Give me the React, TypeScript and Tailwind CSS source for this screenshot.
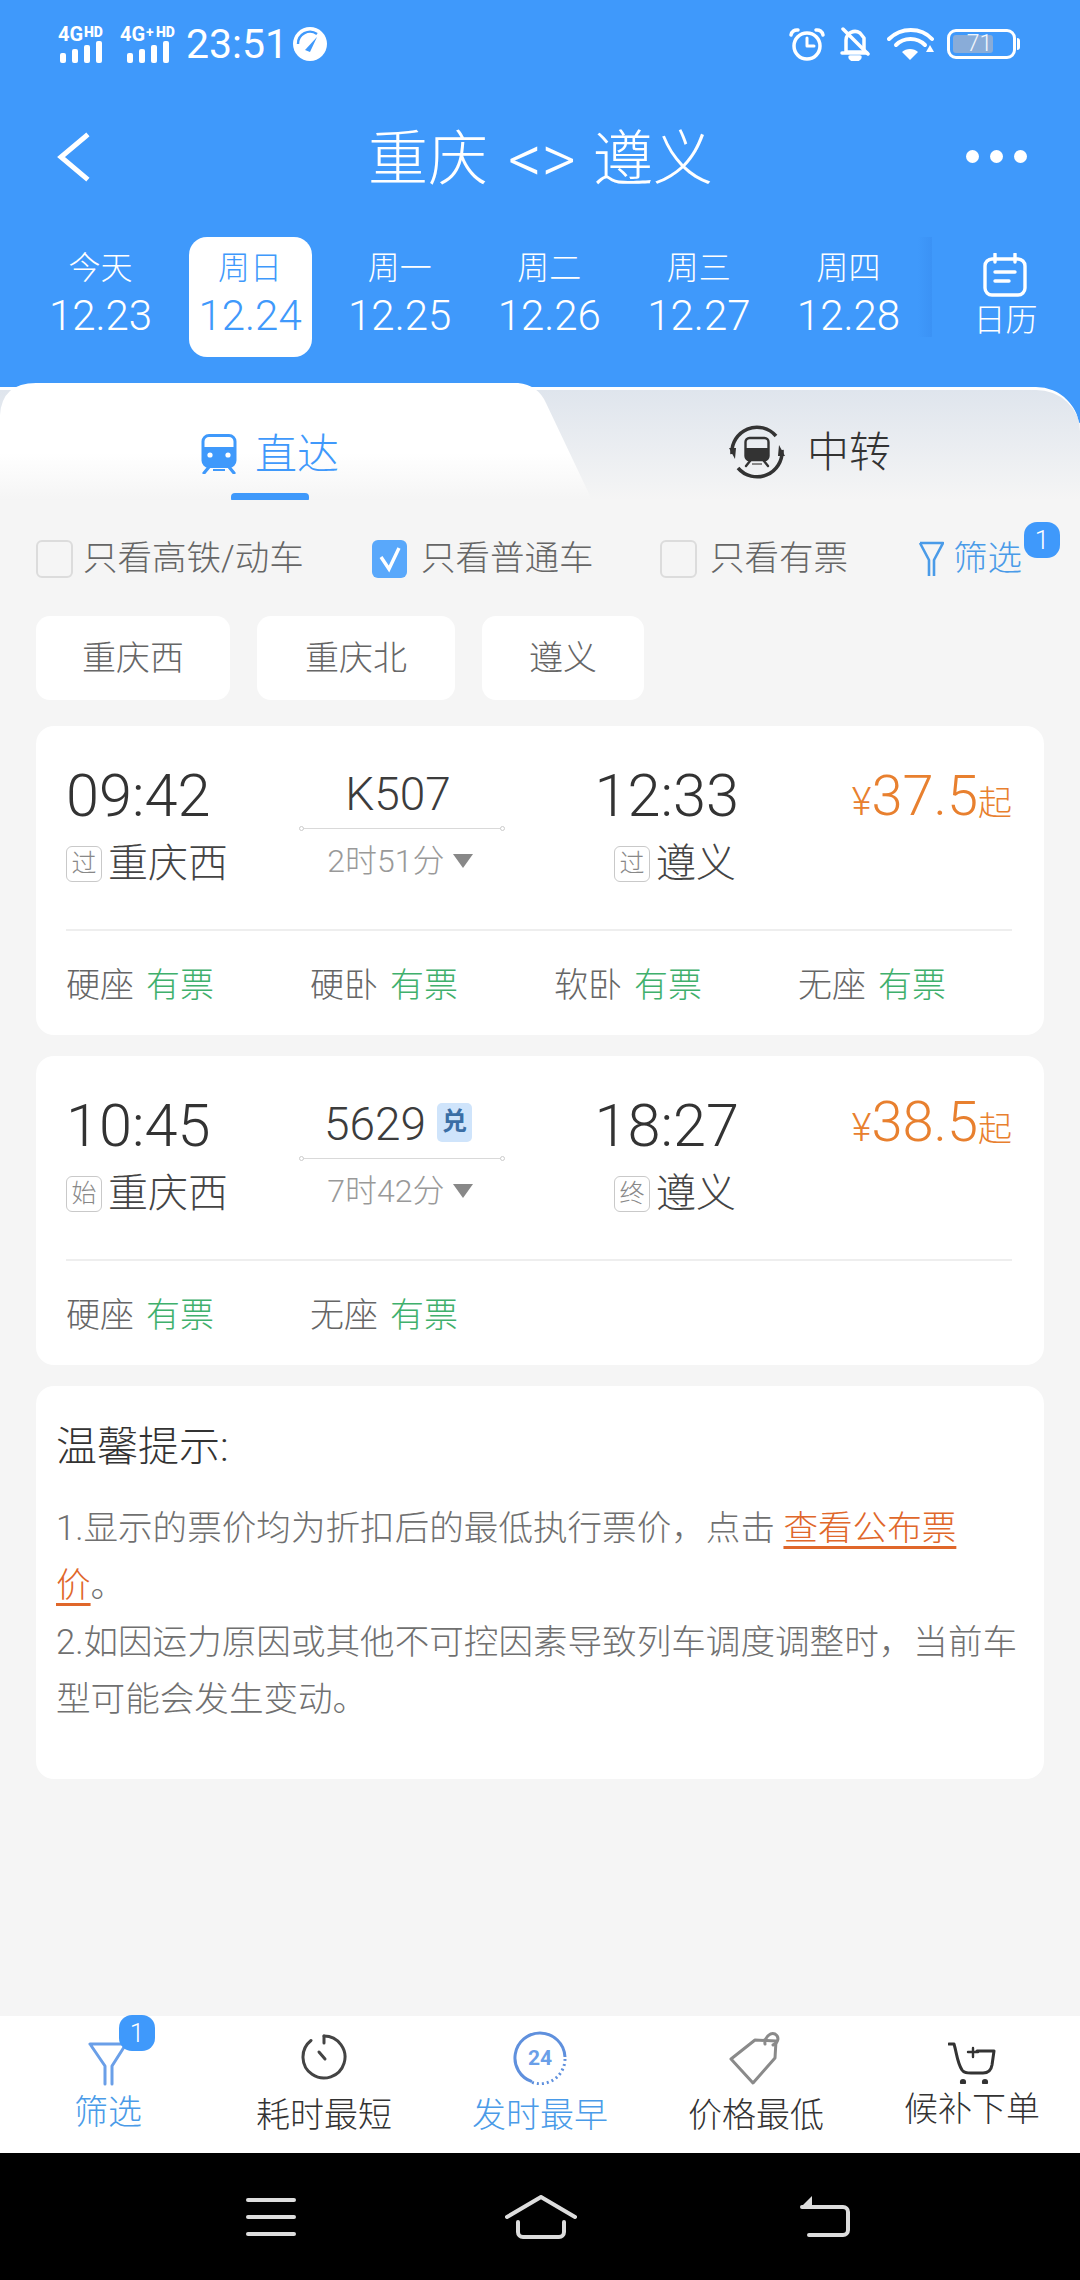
import React from "react";

const BLUE = "#3f99fb";

const dates = [
  { week: "今天", date: "12.23" },
  { week: "周日", date: "12.24", active: true },
  { week: "周一", date: "12.25" },
  { week: "周二", date: "12.26" },
  { week: "周三", date: "12.27" },
  { week: "周四", date: "12.28" },
];

const Signal = ({ plus }: { plus?: boolean }) => (
  <svg className="-mt-[4px]" width="58" height="44" viewBox="0 -4 58 44" fill="white">
    <text x="0" y="17" fontSize="20" fontWeight="700" fontFamily="Roboto">4G</text>
    {plus && <text x="26" y="13" fontSize="14" fontWeight="700" fontFamily="Roboto">+</text>}
    <text x={plus ? 36 : 26} y="13" fontSize="14" fontWeight="900" fontFamily="Roboto">HD</text>
    <rect x={plus ? 7 : 2} y="29" width="6" height="10" rx="2" />
    <rect x={plus ? 19 : 14} y="25" width="6" height="14" rx="2" />
    <rect x={plus ? 31 : 26} y="21" width="6" height="18" rx="2" />
    <rect x={plus ? 43 : 38} y="17" width="6" height="22" rx="2" />
  </svg>
);

const StatusRight = () => (
  <div className="flex items-center">
    {/* alarm */}
    <svg width="36" height="34" viewBox="0 0 36 34" fill="none" stroke="white" strokeWidth="3.5" strokeLinecap="round" strokeLinejoin="round">
      <circle cx="18" cy="19" r="13" />
      <path d="M18 11v8h7" strokeWidth="3" />
      <path d="M2 8a6 6 0 0 1 7-5M34 8a6 6 0 0 0-7-5" strokeWidth="3.5" />
    </svg>
    {/* muted bell */}
    <svg className="ml-[14px]" width="32" height="34" viewBox="0 0 32 34" fill="none" stroke="white" strokeWidth="3.5" strokeLinecap="round" strokeLinejoin="round">
      <path d="M7 25V13a9 9 0 0 1 14-7l4 5v14z" />
      <path d="M3 26h25" />
      <path d="M4 2l25 25" />
      <path d="M11 30a5 3 0 0 0 10 0z" fill="white" />
    </svg>
    {/* wifi */}
    <svg className="ml-[16px]" width="48" height="34" viewBox="0 0 48 34" fill="none" stroke="white" strokeWidth="4" strokeLinecap="round">
      <path d="M2 12c12-12 32-12 43 0" />
      <path d="M9 18c8-8 21-8 29 0" />
      <path d="M23 33l-8-8c4-4 12-4 16 0z" fill="white" stroke="none" />
      <path d="M47 25h-8l4-7z" fill="white" stroke="none" />
    </svg>
    {/* battery */}
    <div className="ml-[12px] flex items-center">
      <div className="w-[69px] h-[30px] rounded-[9px] border-[3px] border-white p-[3px] relative">
        <div className="h-full w-[71%] rounded-[3px] bg-[#89acd8]" />
        <span className="absolute inset-0 flex items-center justify-center text-[23px] text-white/90 pr-[4px]">71</span>
      </div>
      <div className="w-[3px] h-[12px] ml-[1px] rounded-r-full bg-white" />
    </div>
  </div>
);

const TrainMark = ({ color }: { color: string }) => (
  <svg width="36" height="40" viewBox="0 0 36 40" fill="none">
    <rect x="2" y="1.5" width="32" height="31" rx="6" stroke={color} strokeWidth="3" fill="none" />
    <path d="M2 13h32v14a6 6 0 0 1-6 6H8a6 6 0 0 1-6-6z" fill={color} />
    <circle cx="9" cy="21" r="2.6" fill="white" />
    <circle cx="27" cy="21" r="2.6" fill="white" />
    <path d="M8 33l-5 6M28 33l5 6" stroke={color} strokeWidth="3.2" strokeLinecap="round" />
    <path d="M12 36h12" stroke={color} strokeWidth="2" />
  </svg>
);

const TransferIcon = () => (
  <svg width="56" height="56" viewBox="0 0 56 56" fill="none">
    <path d="M3 30A25 25 0 0 1 47 12" stroke="#333" strokeWidth="3.5" />
    <path d="M53 26A25 25 0 0 1 9 44" stroke="#333" strokeWidth="3.5" />
    <path d="M0 24l7 0-1 11z" fill="#333" />
    <path d="M56 32l-7 0 1-11z" fill="#333" />
    <g transform="translate(15 13)">
      <rect x="1.5" y="1" width="23" height="22" rx="4" stroke="#333" strokeWidth="2.4" />
      <path d="M1.5 11h23v9a4 4 0 0 1-4 4h-15a4 4 0 0 1-4-4z" fill="#333" />
      <path d="M6 24l-4 5M20 24l4 5" stroke="#333" strokeWidth="2.4" strokeLinecap="round" />
      <path d="M8 27h10" stroke="#888" strokeWidth="2" />
    </g>
  </svg>
);

const Check = ({ on }: { on?: boolean }) =>
  on ? (
    <div className="w-[35px] h-[38px] rounded-[6px] bg-[#59a8fb] flex items-center justify-center">
      <svg width="26" height="28" viewBox="0 0 26 28" fill="none" stroke="white" strokeWidth="3.4">
        <path d="M4 12l8 12L22 3" />
      </svg>
    </div>
  ) : (
    <div className="w-[37px] h-[38px] rounded-[6px] border-2 border-[#dcdcdc] bg-[#f5f5f5]" />
  );

const Badge = () => (
  <div className="w-[36px] h-[36px] rounded-[13px] bg-[#3f99fb] text-white text-[26px] flex items-center justify-center">1</div>
);

type Train = {
  dep: string;
  arr: string;
  no: string;
  dui?: boolean;
  depTag: string;
  arrTag: string;
  duration: string;
  price: string;
  seats: string[];
  priceTop: string;
};

const trains: Train[] = [
  { dep: "09:42", arr: "12:33", no: "K507", depTag: "过", arrTag: "过", duration: "2时51分", price: "37.5", seats: ["硬座", "硬卧", "软卧", "无座"], priceTop: "-mt-[1px]" },
  { dep: "10:45", arr: "18:27", no: "5629", dui: true, depTag: "始", arrTag: "终", duration: "7时42分", price: "38.5", seats: ["硬座", "无座"], priceTop: "-mt-[5px]" },
];

const Tag = ({ text }: { text: string }) => (
  <span className="w-[36px] h-[36px] rounded-[6px] border border-[#c9c9c9] text-[25px] text-[#888] flex items-center justify-center shrink-0">{text}</span>
);

const TrainCard = ({ t }: { t: Train }) => (
  <div className="bg-white rounded-[18px] h-[309px] pt-[35px] pl-[30px] pr-[32px]">
    <div className="flex h-[136px]">
      <div className="w-[235px] shrink-0">
        <div className="h-[70px] text-[59.5px] leading-[70px] text-[#333]">{t.dep}</div>
        <div className="flex items-center h-[66px]">
          <Tag text={t.depTag} />
          <span className="ml-[6px] text-[40px] text-[#444]">重庆西</span>
        </div>
      </div>
      <div className="w-[202px] shrink-0">
        <div className="h-[67px] flex items-center justify-center pr-[8px] text-[46px] text-[#3c3c3c]">
          <span>{t.no}</span>
          {t.dui && (
            <span className="ml-[11px] -mt-[5px] w-[35px] h-[39px] rounded-[5px] bg-[#cfe4fb] text-[#3a6ea5] text-[25px] font-bold flex items-center justify-center">兑</span>
          )}
        </div>
        <div className="relative h-[1px] bg-[#d9d9d9]">
          <span className="absolute -left-[2px] -top-[2px] w-[5px] h-[5px] rounded-full border border-[#ccc] bg-white" />
          <span className="absolute -right-[2px] -top-[2px] w-[5px] h-[5px] rounded-full border border-[#ccc] bg-white" />
        </div>
        <div className="flex items-center justify-center pr-[4px] h-[64px] text-[32px] text-[#999]">
          <span>{t.duration}</span>
          <span className="ml-[8px] w-0 h-0 border-l-[10px] border-r-[10px] border-t-[14px] border-l-transparent border-r-transparent border-t-[#888]" />
        </div>
      </div>
      <div className="w-[236px] shrink-0 flex flex-col items-end">
        <div className="h-[70px] text-[59.5px] leading-[70px] text-[#333]">{t.arr}</div>
        <div className="flex items-center h-[66px] pr-[3px]">
          <Tag text={t.arrTag} />
          <span className="ml-[6px] text-[40px] text-[#444]">遵义</span>
        </div>
      </div>
      <div className={`flex-1 flex items-baseline justify-end h-[72px] whitespace-nowrap text-[#e8802f] ${t.priceTop}`}>
        <span className="text-[38px]">¥</span>
        <span className="text-[56px] leading-[72px]">{t.price}</span>
        <span className="text-[34px]">起</span>
      </div>
    </div>
    <div className="h-[2px] bg-[#eeeeee] mt-[32px]" />
    <div className="flex h-[108px] items-center text-[34px]">
      {t.seats.map((s) => (
        <div key={s} className="w-[244px] shrink-0 flex">
          <span className="text-[#666]">{s}</span>
          <span className="ml-[12px] text-[#3fb06c]">有票</span>
        </div>
      ))}
    </div>
  </div>
);

const BottomItem = ({ label, active, icon, iconH, textTop }: { label: string; active?: boolean; icon: React.ReactNode; iconH: string; textTop: string }) => (
  <div className="w-[216px] flex flex-col items-center">
    <div className={`flex items-end justify-center ${iconH}`}>{icon}</div>
    <span className={`${textTop} text-[34px] leading-[44px] ${active ? "text-[#4a9be8]" : "text-[#333]"}`}>{label}</span>
  </div>
);

export default function App() {
  return (
    <div className="w-[1080px] h-[2280px] flex flex-col bg-[#f5f5f5] overflow-hidden font-[Roboto,'Noto_Sans_CJK_SC',sans-serif] font-light">
      {/* blue header */}
      <div className="bg-[#3f99fb] text-white">
        <div className="h-[86px] flex items-center justify-between pl-[58px] pr-[60px] pt-[2px]">
          <div className="flex items-center">
            <Signal />
            <div className="ml-[4px]"><Signal plus /></div>
            <span className="ml-[8px] text-[41px] font-normal leading-none">23:51</span>
            <svg className="ml-[5px]" width="34" height="34" viewBox="0 0 34 34">
              <circle cx="17" cy="17" r="17" fill="white" />
              <path d="M5 17a12 12 0 0 1 19-10" stroke="#3f99fb" strokeWidth="2.4" fill="none" />
              <path d="M12 23l12-13-7 15z" fill="#3f99fb" />
            </svg>
          </div>
          <StatusRight />
        </div>
        <div className="h-[144px] flex items-center justify-between pl-[55px] pr-[53px] pt-[3px]">
          <div className="w-[80px] mb-[6px]">
            <svg width="36" height="50" viewBox="0 0 36 50" fill="none" stroke="white" strokeWidth="5">
              <path d="M31 4L6 25l25 21" strokeLinecap="square" />
            </svg>
          </div>
          <div className="flex items-center text-[60px] leading-none mr-[1px]">
            <span>重庆</span>
            <span className="ml-[20px] text-[66px]">&lt;&gt;</span>
            <span className="ml-[17px]">遵义</span>
          </div>
          <div className="w-[80px] flex justify-end gap-[11px] mb-[6px]">
            <span className="w-[13px] h-[13px] rounded-full bg-white" />
            <span className="w-[13px] h-[13px] rounded-full bg-white" />
            <span className="w-[13px] h-[13px] rounded-full bg-white" />
          </div>
        </div>
        <div className="mt-[7px] h-[120px] flex pl-[39px]">
          <div className="flex gap-[26.6px]">
            {dates.map((d) => (
              <div key={d.date} className={`w-[123px] h-[120px] rounded-[18px] flex flex-col items-center pt-[10px] ${d.active ? "bg-white text-[#3f99fb]" : ""}`}>
                <span className="text-[32px] leading-[42px]">{d.week}</span>
                <span className="text-[42px] leading-[54px]">{d.date}</span>
              </div>
            ))}
          </div>
          <div className="ml-[8px] w-[14px] h-[100px] bg-gradient-to-r from-transparent to-[#3b92f5]" />
          <div className="flex-1 flex flex-col items-center pt-[16px] pr-[1px]">
            <svg width="44" height="44" viewBox="0 0 44 44" fill="none" stroke="white" strokeWidth="3.4" strokeLinecap="round">
              <rect x="2" y="6" width="40" height="36" rx="7" />
              <path d="M12 1v8M32 1v8M12 19h20M12 28h14" />
            </svg>
            <span className="text-[32px] leading-[40px] mt-[3px]">日历</span>
          </div>
        </div>
        <div className="h-[26px]" />
      </div>

      {/* tabs */}
      <div className="relative h-[117px] bg-[linear-gradient(#3f99fb_0,#3f99fb_40px,#f5f5f5_40px)]">
        <div className="mt-[4px] h-[113px] rounded-tr-[44px] border-t-[3px] border-white bg-gradient-to-b from-[#dfe5ed] to-[#f5f5f5] flex justify-end">
          <div className="w-[488px] flex items-center h-[124px] pl-[137px]">
            <TransferIcon />
            <span className="ml-[22px] text-[42px] text-[#333]">中转</span>
          </div>
        </div>
        <div className="absolute left-0 top-0 w-[592px] h-[117px] bg-gradient-to-b from-white from-[60%] to-[#f5f5f5] [clip-path:path('M0,32_Q2,0_36,0_L518,0_Q538,2_546,20_L592,117_L0,117_Z')]">
          <div className="flex items-center h-[110px] pl-[201px] pt-[32px]">
            <TrainMark color={BLUE} />
            <span className="ml-[18px] text-[42px] text-[#3f99fb]">直达</span>
          </div>
          <div className="absolute left-[231px] top-[110px] w-[78px] h-[9px] rounded-[4px] bg-[#3f99fb]" />
        </div>
      </div>

      {/* filter row */}
      <div className="h-[78px] flex items-center pl-[36px] text-[34.5px] text-[#666] mt-[20px] relative">
        <Check />
        <span className="ml-[10px] w-[289px]">只看高铁/动车</span>
        <Check on />
        <span className="ml-[14px] w-[239px]">只看普通车</span>
        <Check />
        <span className="ml-[13px] w-[208px]">只看有票</span>
        <svg width="26" height="38" viewBox="0 0 26 38" fill="none" stroke="#4a9be8" strokeWidth="2.6" strokeLinejoin="round">
          <path d="M2 3h23L16 20v16M11 36V20L2 3" />
        </svg>
        <span className="ml-[9px] text-[#4a9be8]">筛选</span>
        <div className="absolute left-[1024px] top-[2px]"><Badge /></div>
      </div>

      {/* station chips */}
      <div className="flex mt-[18px] pl-[36px] gap-[27px] text-[34px] text-[#666]">
        <div className="w-[194px] h-[84px] rounded-[14px] bg-white flex items-center justify-center">重庆西</div>
        <div className="w-[198px] h-[84px] rounded-[14px] bg-white flex items-center justify-center">重庆北</div>
        <div className="w-[162px] h-[84px] rounded-[14px] bg-white flex items-center justify-center">遵义</div>
      </div>

      {/* trains */}
      <div className="mt-[26px] mx-[36px] flex flex-col gap-[21px]">
        {trains.map((t) => (
          <TrainCard key={t.no} t={t} />
        ))}

        <div className="bg-white rounded-[18px] h-[393px] pt-[36px] pl-[20px] pr-[16px]">
          <div className="text-[41px] leading-[50px] text-[#333]">温馨提示:</div>
          <div className="mt-[28px] text-[34.6px] leading-[57px] text-[#707070]">
            <div>
              1.显示的票价均为折扣后的最低执行票价，点击{" "}
              <span className="text-[#e0672a] underline decoration-[3px] underline-offset-[6px]">查看公布票<br />价</span>。
            </div>
            <div>2.如因运力原因或其他不可控因素导致列车调度调整时，当前车型可能会发生变动。</div>
          </div>
        </div>
      </div>

      <div className="flex-1" />

      {/* bottom bar */}
      <div className="h-[137px] bg-white flex">
        <BottomItem
          label="筛选"
          active
          iconH="h-[70px]"
          textTop="mt-[4px]"
          icon={
            <div className="relative w-[40px] h-[45px]">
              <svg width="40" height="45" viewBox="0 0 40 45" fill="none" stroke="#6a9fe8" strokeWidth="3" strokeLinejoin="round" strokeLinecap="round">
                <path d="M2 3h36L24 25v18M17 43V25L2 3" />
              </svg>
              <div className="absolute left-[31px] -top-[26px]"><Badge /></div>
            </div>
          }
        />
        <BottomItem
          label="耗时最短"
          iconH="h-[64px]"
          textTop="mt-[13px]"
          icon={
            <svg width="46" height="46" viewBox="0 0 46 46" fill="none" stroke="#444" strokeWidth="3" strokeLinecap="round">
              <path d="M23 2a21 21 0 1 1-13 4.5" />
              <path d="M23 2v7" />
              <path d="M18 18l6 7" />
            </svg>
          }
        />
        <BottomItem
          label="发时最早"
          active
          iconH="h-[69px]"
          textTop="mt-[8px]"
          icon={
            <svg width="54" height="54" viewBox="0 0 54 54" fill="none">
              <path d="M27 2a25 25 0 0 0-8 48.7" stroke="#5f90dd" strokeWidth="3" fill="none" />
              <path d="M27 2a25 25 0 0 1 25 24" stroke="#5f90dd" strokeWidth="3" fill="none" />
              <path d="M52 28a25 25 0 0 1-33 23.4" stroke="#5f90dd" strokeWidth="3" strokeDasharray="2 3" fill="none" />
              <text x="27" y="34" textAnchor="middle" fontSize="21" fontWeight="700" fontFamily="Roboto" fill="#6a9fe8">24</text>
            </svg>
          }
        />
        <BottomItem
          label="价格最低"
          iconH="h-[69px]"
          textTop="mt-[8px]"
          icon={
            <svg width="54" height="54" viewBox="0 0 54 54" fill="none" stroke="#8a8a8a" strokeWidth="3" strokeLinejoin="round" strokeLinecap="round">
              <path d="M26 9L2 28l22 24 22-25 1-17z" />
              <path d="M36 13c-1-6 5-12 10-10 5 3 3 9-2 11" />
            </svg>
          }
        />
        <BottomItem
          label="候补下单"
          iconH="h-[68px]"
          textTop="mt-[3px]"
          icon={
            <svg width="48" height="42" viewBox="0 0 48 42" fill="none" stroke="#333" strokeWidth="3" strokeLinecap="round" strokeLinejoin="round">
              <path d="M1 2h5c3 10 3 18 8 26 2 3 5 3 9 3h12c5 0 8-2 9-8l2-14H29" />
              <path d="M20 9h10M25 5v9" strokeWidth="2.4" transform="translate(0 1)" />
              <circle cx="15" cy="40" r="1.6" fill="#333" />
              <circle cx="37" cy="40" r="1.6" fill="#333" />
            </svg>
          }
        />
      </div>

      {/* system nav */}
      <div className="h-[127px] bg-black flex items-start pt-[42px] pl-[246px]">
        <div className="w-[50px] h-[38px] flex flex-col justify-between mt-[3px]">
          <span className="h-[4px] rounded-full bg-[#ddd]" />
          <span className="h-[4px] rounded-full bg-[#ddd]" />
          <span className="h-[4px] rounded-full bg-[#ddd]" />
        </div>
        <svg className="ml-[209px]" width="72" height="44" viewBox="0 0 72 44" fill="none" stroke="#ddd" strokeWidth="4" strokeLinecap="round" strokeLinejoin="round">
          <path d="M2 22L36 2l34 20" />
          <path d="M13 27v10a5 5 0 0 0 5 5h36a5 5 0 0 0 5-5V27" />
        </svg>
        <svg className="ml-[222px]" width="52" height="42" viewBox="0 0 52 42" fill="none" stroke="#ddd" strokeWidth="4" strokeLinecap="round" strokeLinejoin="round">
          <path d="M3 12h41a5 5 0 0 1 5 5v18a5 5 0 0 1-5 5H10" />
          <path d="M13 1L2 12h11z" fill="#ddd" stroke="none" />
        </svg>
      </div>
    </div>
  );
}
